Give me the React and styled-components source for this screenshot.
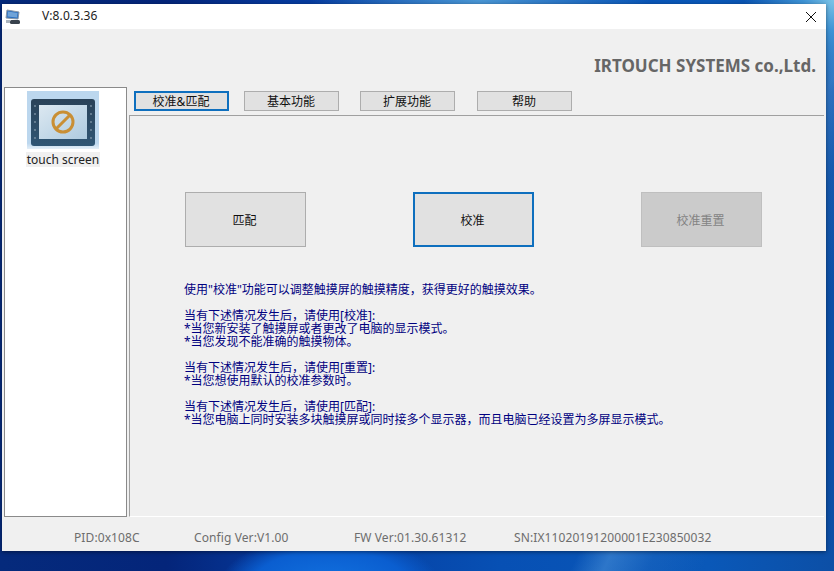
import React from "react";
import styled, { createGlobalStyle } from "styled-components";

const Global = createGlobalStyle`
  html, body { margin: 0; padding: 0; width: 834px; height: 571px; overflow: hidden; }
  * { box-sizing: border-box; }
`;
const CJK = `"Noto Sans", "Noto Sans CJK SC", sans-serif`;

const Desktop = styled.div`
  width: 834px; height: 571px; padding: 4px 0 0 2px;
  background:
    radial-gradient(circle at 834px 0, #7cc4e6 0, #3f94d6 30px, transparent 90px),
    radial-gradient(ellipse 170px 60px at 480px 0, #4a96d4 0, transparent 100%),
    radial-gradient(ellipse 110px 50px at 330px 585px, #1272e0 0, #0a5ed0 70%, transparent 100%),
    linear-gradient(115deg, transparent 76%, rgba(90,160,225,.45) 79%, rgba(90,160,225,.12) 83%, transparent 88%),
    linear-gradient(90deg, #052a7c 0%, #04257a 20%, #06399c 34%, #0750b4 60%, #0a58b8 85%, #0c4fa6 100%);
`;
const Window = styled.div`
  width: 824px; height: 547px; background: #f0f0f0;
  display: flex; flex-direction: column;
  box-shadow: 0 1px 4px rgba(0,0,0,.45);
  font-family: ${CJK};
`;
const TitleBar = styled.div`
  height: 25px; flex: none; background: #fff; display: flex; align-items: center;
  padding: 0 9px 0 3px;
`;
const Version = styled.span`font-size: 12px; color: #222; margin-left: 21px; padding-bottom: 2px; flex: 1; letter-spacing: .1px;`;
const Header = styled.div`
  height: 58px; flex: none; display: flex; justify-content: flex-end; align-items: flex-start;
  padding: 27px 10px 0 0;
`;
const Company = styled.div`
  font: 700 17px/20px "Noto Sans", sans-serif; color: #666; white-space: nowrap;
`;
const Body = styled.div`height: 430px; flex: none; display: flex; padding-left: 2px;`;
const Sidebar = styled.div`
  width: 123px; height: 430px; flex: none; background: #fff; border: 1px solid #8a8a8a;
  display: flex; flex-direction: column; align-items: center; padding: 3px 5px 0 0;
`;
const DeviceIcon = styled.svg`width: 72px; height: 58px; display: block; flex: none;`;
const DeviceLabel = styled.div`
  background: #f0f0f0; font-size: 12px; line-height: 15px; color: #222; padding: 0 1px; margin-top: 3px;
`;
const Main = styled.div`flex: 1; display: flex; flex-direction: column; padding-left: 2px;`;
const Tabs = styled.div`display: flex; height: 28px; padding: 4px 0 0 5px; flex: none;`;
const Tab = styled.div`
  width: 95px; height: 20px; margin-right: ${p => p.$gap}px; padding-right: 1px;
  background: #e1e1e1; color: #111; font-size: 12px; text-align: center;
  border: ${p => (p.$active ? "2px solid #0e6fbe" : "1px solid #adadad")};
  line-height: ${p => (p.$active ? "18px" : "20px")};
`;
const Panel = styled.div`
  flex: 1; border-top: 1px solid #a0a0a0; border-left: 1px solid #a0a0a0; border-bottom: 1px solid #fff;
  padding: 76px 0 0 55px; margin-right: 2px;
`;
const Actions = styled.div`display: flex; gap: 107px;`;
const Action = styled.div`
  width: 121px; height: 55px; display: flex; align-items: center; justify-content: center; font-size: 12px;
  padding: 1px 2px 0 0;
  background: ${p => (p.$disabled ? "#cbcbcb" : "#e1e1e1")};
  color: ${p => (p.$disabled ? "#838383" : "#111")};
  border: ${p => (p.$focus ? "2px solid #0e6fbe" : p.$disabled ? "1px solid #bfbfbf" : "1px solid #adadad")};
`;
const Help = styled.div`
  margin: 36px 0 0 -1px; font-size: 12px; line-height: 13px; color: #000080; white-space: pre;
`;
const Footer = styled.div`flex: 1; display: flex; padding: 13px 0 0 72px; font-size: 12px; line-height: 15px; color: #6d6d6d; letter-spacing: .1px;`;
const Cell = styled.span`width: ${p => p.$w}px; flex: none; white-space: nowrap;`;

const AppIcon = () => (
  <svg width="16" height="16" viewBox="0 0 16 16">
    <path d="M2 1 L14 3 L13 10 L1 9 Z" fill="#2a6fc0" stroke="#8a97a5" />
    <path d="M3 2.5 L12.5 4 L12 8.5 L2.5 7.5 Z" fill="#6fa3d8" />
    <rect x="5" y="11" width="10" height="4" rx="1.5" fill="#39424d" />
    <rect x="1" y="11" width="4" height="3" fill="#aab4be" />
  </svg>
);
const CloseIcon = () => (
  <svg width="12" height="12" viewBox="0 0 12 12">
    <path d="M1 1 L11 11 M11 1 L1 11" stroke="#111" strokeWidth="1" fill="none" />
  </svg>
);
const Device = () => (
  <DeviceIcon viewBox="0 0 72 58">
    <defs>
      <linearGradient id="bg" x1="0" y1="0" x2="0" y2="1">
        <stop offset="0.9" stopColor="#bcd7ee" />
        <stop offset="1" stopColor="#e4eff8" />
      </linearGradient>
      <linearGradient id="frame" x1="0" y1="0" x2="0" y2="1">
        <stop offset="0" stopColor="#2a4258" />
        <stop offset="1" stopColor="#2f5675" />
      </linearGradient>
      <linearGradient id="screen" x1="0" y1="0" x2="1" y2="1">
        <stop offset="0" stopColor="#dce8f1" />
        <stop offset="1" stopColor="#aecbe0" />
      </linearGradient>
    </defs>
    <rect width="72" height="58" fill="url(#bg)" />
    <rect x="4" y="8" width="64" height="47" rx="3" fill="url(#frame)" />
    <rect x="12" y="14" width="48" height="34" fill="url(#screen)" />
    {[15, 23, 31, 39, 47].map(y => (
      <g key={y} fill="#7d93a6">
        <circle cx="8" cy={y} r="0.9" />
        <circle cx="64" cy={y} r="0.9" />
      </g>
    ))}
    <circle cx="36" cy="31" r="10" fill="none" stroke="#c98f35" strokeWidth="3" />
    <path d="M29 38 L43 24" stroke="#c98f35" strokeWidth="3" />
  </DeviceIcon>
);

const helpText = [
  "使用\"校准\"功能可以调整触摸屏的触摸精度\uFF0C获得更好的触摸效果。", "",
  "当有下述情况发生后\uFF0C请使用[校准]:",
  "*当您新安装了触摸屏或者更改了电脑的显示模式。",
  "*当您发现不能准确的触摸物体。", "",
  "当有下述情况发生后\uFF0C请使用[重置]:",
  "*当您想使用默认的校准参数时。", "",
  "当有下述情况发生后\uFF0C请使用[匹配]:",
  "*当您电脑上同时安装多块触摸屏或同时接多个显示器\uFF0C而且电脑已经设置为多屏显示模式。",
].join("\n");

export default function App() {
  return (
    <Desktop>
      <Global />
      <Window>
        <TitleBar>
          <AppIcon />
          <Version>V:8.0.3.36</Version>
          <CloseIcon />
        </TitleBar>
        <Header><Company>IRTOUCH SYSTEMS co.,Ltd.</Company></Header>
        <Body>
          <Sidebar>
            <Device />
            <DeviceLabel>touch screen</DeviceLabel>
          </Sidebar>
          <Main>
            <Tabs>
              <Tab $active $gap={15}>校准&amp;匹配</Tab>
              <Tab $gap={21}>基本功能</Tab>
              <Tab $gap={22}>扩展功能</Tab>
              <Tab $gap={0}>帮助</Tab>
            </Tabs>
            <Panel>
              <Actions>
                <Action>匹配</Action>
                <Action $focus>校准</Action>
                <Action $disabled>校准重置</Action>
              </Actions>
              <Help>{helpText}</Help>
            </Panel>
          </Main>
        </Body>
        <Footer>
          <Cell $w={120}>PID:0x108C</Cell>
          <Cell $w={160}>Config Ver:V1.00</Cell>
          <Cell $w={160}>FW Ver:01.30.61312</Cell>
          <Cell $w={220}>SN:IX11020191200001E230850032</Cell>
        </Footer>
      </Window>
    </Desktop>
  );
}
